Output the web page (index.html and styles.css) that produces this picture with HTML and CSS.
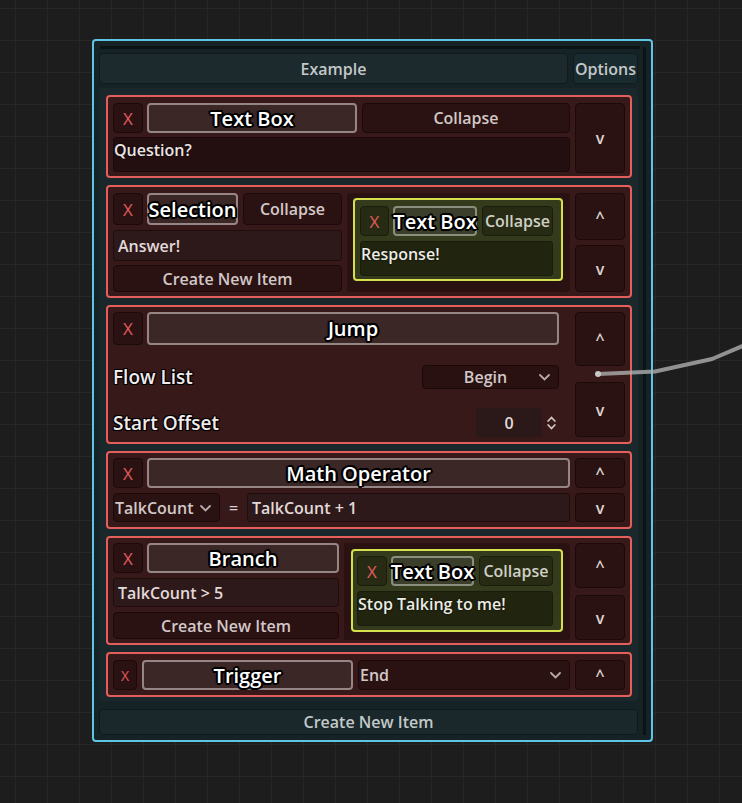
FILE: index.html
```html
<!DOCTYPE html>
<html>
<head>
<meta charset="utf-8">
<link rel="stylesheet" href="styles.css">
</head>
<body>
<div class="canvas">
  <div class="panel">
    <div class="topline"></div>
    <div class="panel-body">
      <div class="main">
        <div class="header">
          <div class="hbtn grow">Example</div>
          <div class="hbtn opts">Options</div>
        </div>
        <div class="list">
          <!-- Text Box -->
          <div class="block">
            <div class="bmain col g4">
              <div class="row h30 g4">
                <div class="btn x w30">X</div>
                <div class="tbtn grow">Text Box</div>
                <div class="btn grow ml1">Collapse</div>
              </div>
              <div class="area h35">Question?</div>
            </div>
            <div class="side col">
              <div class="btn sbtn h70">v</div>
            </div>
          </div>

          <!-- Selection -->
          <div class="block b2">
            <div class="bmain row g5">
              <div class="col w229">
                <div class="row h32 g4">
                  <div class="btn x w30">X</div>
                  <div class="tbtn w91">Selection</div>
                  <div class="btn grow ml1">Collapse</div>
                </div>
                <div class="input h31 mt5">Answer!</div>
                <div class="btn h27 mt4">Create New Item</div>
              </div>
              <div class="nest grow n2">
                <div class="ybox y2">
                  <div class="row h30 g4">
                    <div class="ybtn x w29">X</div>
                    <div class="ytbtn w84">Text Box</div>
                    <div class="ybtn grow ml1">Collapse</div>
                  </div>
                  <div class="yarea h35 mt5">Response!</div>
                </div>
              </div>
            </div>
            <div class="side col g5">
              <div class="btn sbtn grow">^</div>
              <div class="btn sbtn grow">v</div>
            </div>
          </div>

          <!-- Jump -->
          <div class="block b3">
            <div class="bmain col">
              <div class="row h33 g4">
                <div class="btn x w30">X</div>
                <div class="tbtn grow">Jump</div>
              </div>
              <div class="row h30 mt17 between">
                <div class="label">Flow List</div>
                <div class="btn drop w137">
                  <span class="dtext">Begin</span>
                  <svg class="chev" width="11" height="7" viewBox="0 0 11 7"><path d="M1 1 L5.5 5.5 L10 1" stroke="#b9a9a9" stroke-width="1.8" fill="none" stroke-linecap="round"/></svg>
                </div>
              </div>
              <div class="row h29 mt16 between">
                <div class="label">Start Offset</div>
                <div class="row spin">
                  <div class="spinbox">0</div>
                  <svg class="spinicon" width="9" height="16" viewBox="0 0 9 16"><path d="M1.2 6 L4.5 2.5 L7.8 6 M1.2 10 L4.5 13.5 L7.8 10" stroke="#cfc3c3" stroke-width="1.8" fill="none" stroke-linecap="round"/></svg>
                </div>
              </div>
            </div>
            <div class="side col jside">
              <div class="btn sbtn h54">^</div>
              <div class="btn sbtn h55">v</div>
            </div>
          </div>

          <!-- Math Operator -->
          <div class="block b4">
            <div class="bmain col g5">
              <div class="row h30 g4">
                <div class="btn x w30">X</div>
                <div class="tbtn grow">Math Operator</div>
              </div>
              <div class="row h29">
                <div class="btn drop2 w107">
                  <span>TalkCount</span>
                  <svg class="chev" width="11" height="7" viewBox="0 0 11 7"><path d="M1 1 L5.5 5.5 L10 1" stroke="#b9a9a9" stroke-width="1.8" fill="none" stroke-linecap="round"/></svg>
                </div>
                <div class="eq">=</div>
                <div class="input grow">TalkCount + 1</div>
              </div>
            </div>
            <div class="side col g5">
              <div class="btn sbtn h30">^</div>
              <div class="btn sbtn h29">v</div>
            </div>
          </div>

          <!-- Branch -->
          <div class="block b5">
            <div class="bmain row g5">
              <div class="col w226">
                <div class="row h30 g4">
                  <div class="btn x w30">X</div>
                  <div class="tbtn grow">Branch</div>
                </div>
                <div class="input h29 mt5">TalkCount &gt; 5</div>
                <div class="btn h27 mt5">Create New Item</div>
              </div>
              <div class="nest grow n5">
                <div class="ybox y5">
                  <div class="row h30 g4">
                    <div class="ybtn x w30">X</div>
                    <div class="ytbtn w83">Text Box</div>
                    <div class="ybtn grow ml1">Collapse</div>
                  </div>
                  <div class="yarea h35 mt5">Stop Talking to me!</div>
                </div>
              </div>
            </div>
            <div class="side col g7">
              <div class="btn sbtn h45">^</div>
              <div class="btn sbtn h45">v</div>
            </div>
          </div>

          <!-- Trigger -->
          <div class="block b6">
            <div class="bmain row h30 g5">
              <div class="btn x xs w24">X</div>
              <div class="tbtn w211">Trigger</div>
              <div class="btn drop3 grow">
                <span>End</span>
                <svg class="chev" width="11" height="7" viewBox="0 0 11 7"><path d="M1 1 L5.5 5.5 L10 1" stroke="#b9a9a9" stroke-width="1.8" fill="none" stroke-linecap="round"/></svg>
              </div>
            </div>
            <div class="side col">
              <div class="btn sbtn h30">^</div>
            </div>
          </div>
        </div>
        <div class="footer">Create New Item</div>
      </div>
      <div class="scroll"></div>
    </div>
  </div>
</div>
<svg class="wire" width="742" height="803" viewBox="0 0 742 803">
  <path d="M598 374 L655 371.5 L712 359 L745 345" stroke="rgba(175,175,175,0.8)" stroke-width="4" fill="none" stroke-linejoin="round"/>
  <circle cx="598" cy="374" r="3" fill="#c8c8c8"/>
</svg>
</body>
</html>
```
FILE: styles.css
```css
html, body {
  margin: 0;
  padding: 0;
}
body {
  width: 742px;
  height: 803px;
  overflow: hidden;
  position: relative;
  font-family: "Open Sans", "Noto Sans", sans-serif;
  font-weight: 600;
  background-color: #1d1d1d;
  background-image:
    linear-gradient(to right, #272727 1px, transparent 1px),
    linear-gradient(to bottom, #272727 1px, transparent 1px);
  background-size: 32px 32px;
  background-position: 15px 8px;
}
.canvas {
  padding: 39px 0 0 92px;
}
.panel {
  width: 561px;
  height: 703px;
  box-sizing: border-box;
  border: 2px solid #5ec6e4;
  border-radius: 4px;
  background: #162326;
  padding: 5px;
  display: flex;
  flex-direction: column;
}
.topline {
  height: 3px;
  background: #0b1315;
  margin: 0 6px 4px 1px;
  border-radius: 1px;
}
.panel-body {
  display: flex;
  flex: 1;
}
.main {
  width: 539px;
  display: flex;
  flex-direction: column;
}
.scroll {
  width: 3px;
  margin-left: 5px;
  margin-top: -6px;
  background: #0b1315;
  border-radius: 1px;
}
.header {
  display: flex;
  gap: 5px;
  height: 31px;
}
.hbtn {
  box-sizing: border-box;
  background: #1c2a2d;
  border: 1px solid #111b1d;
  border-radius: 4px;
  color: #c3c8c8;
  font-size: 16px;
  display: flex;
  align-items: center;
  justify-content: center;
}
.opts {
  width: 65px;
  background: #1a2b2f;
}
.list {
  margin-top: 4px;
  height: 613px;
  box-sizing: border-box;
  background: #1a282b;
  border-radius: 4px;
  padding: 7px 6px 4px 7px;
  display: flex;
  flex-direction: column;
  gap: 7px;
}
.footer {
  margin-top: 8px;
  height: 26px;
  box-sizing: border-box;
  background: #1a282b;
  border: 1px solid #101a1c;
  border-radius: 4px;
  color: #c3c8c8;
  font-size: 16px;
  display: flex;
  align-items: center;
  justify-content: center;
}

/* blocks */
.block {
  border: 2px solid #e35f5b;
  border-radius: 4px;
  background: #381919;
  display: flex;
  gap: 5px;
  padding: 6px 5px 3px 5px;
}
.b2 { padding: 6px 5px 4px 5px; }
.b3 { padding: 5px 5px 5px 5px; gap: 16px; }
.b4 { padding: 5px 5px 5px 5px; }
.b5 { padding: 5px 5px 3px 5px; }
.b6 { padding: 6px 5px 5px 5px; }

.bmain { flex: 1; min-width: 0; }
.side { width: 50px; }
.jside { justify-content: space-between; }

.row { display: flex; }
.col { display: flex; flex-direction: column; }
.grow { flex: 1; min-width: 0; }
.between { justify-content: space-between; align-items: center; }
.g4 { gap: 4px; }
.g5 { gap: 5px; }
.g7 { gap: 7px; }
.ml1 { margin-left: 1px; }
.mt4 { margin-top: 4px; }
.mt5 { margin-top: 5px; }
.mt16 { margin-top: 16px; }
.mt17 { margin-top: 17px; }

.h27 { height: 27px; }
.h29 { height: 29px; }
.h30 { height: 30px; }
.h31 { height: 31px; }
.h32 { height: 32px; }
.h33 { height: 33px; }
.h35 { height: 35px; }
.h45 { height: 45px; }
.h54 { height: 54px; }
.h55 { height: 55px; }
.h70 { height: 70px; }
.w24 { width: 24px; }
.w29 { width: 29px; }
.w30 { width: 30px; }
.w83 { width: 83px; }
.w84 { width: 84px; }
.w91 { width: 91px; }
.w107 { width: 107px; }
.w137 { width: 137px; }
.w211 { width: 211px; }
.w226 { width: 226px; }
.w229 { width: 229px; }

.btn {
  box-sizing: border-box;
  background: #2b1212;
  border: 1px solid #1c0909;
  border-radius: 4px;
  color: #d2c8c8;
  font-size: 16px;
  display: flex;
  align-items: center;
  justify-content: center;
  white-space: nowrap;
  flex-shrink: 0;
}
.btn.grow { flex-shrink: 1; }
.x {
  color: #e35c5c;
  font-size: 17px;
  font-weight: 400;
}
.xs { font-size: 14px; }
.sbtn {
  font-size: 16px;
  color: #ddd4d4;
}
.tbtn {
  box-sizing: border-box;
  background: #3c2727;
  border: 2px solid #968585;
  border-radius: 4px;
  color: #ffffff;
  font-size: 20px;
  display: flex;
  align-items: center;
  justify-content: center;
  white-space: nowrap;
  flex-shrink: 0;
  text-shadow:
    -1px -1px 0 #000, 1px -1px 0 #000, -1px 1px 0 #000, 1px 1px 0 #000,
    0 -2px 0 #000, 0 2px 0 #000, -2px 0 0 #000, 2px 0 0 #000,
    -2px -1px 0 #000, 2px 1px 0 #000, -1px 2px 0 #000, 1px -2px 0 #000,
    0 0 3px #000;
}
.tbtn.grow { flex-shrink: 1; }

.area {
  box-sizing: border-box;
  background: #230f0f;
  border: 1px solid #1c0909;
  border-radius: 3px;
  color: #ece4e4;
  font-size: 16px;
  line-height: 20px;
  padding: 2px 0 0 0;
  text-shadow: 0 0 2px #000;
}
.input {
  box-sizing: border-box;
  background: #2d1919;
  border: 1px solid #1f0d0d;
  border-radius: 3px;
  color: #e2dada;
  font-size: 16px;
  display: flex;
  align-items: center;
  padding-left: 4px;
  white-space: nowrap;
}

.nest {
  box-sizing: border-box;
  background: #2a1212;
  border-radius: 3px;
}
.n2 { padding: 5px 7px 11px 6px; }
.n5 { padding: 6px 7px 8px 7px; }
.ybox {
  box-sizing: border-box;
  border: 2px solid #d5e04c;
  border-radius: 4px;
  background: #343a1c;
  display: flex;
  flex-direction: column;
}
.y2 { padding: 6px 8px 3px 5px; }
.y5 { padding: 5px 8px 4px 4px; }
.ybtn {
  box-sizing: border-box;
  background: #272b14;
  border: 1px solid #1a1d0b;
  border-radius: 4px;
  color: #cfd0c4;
  font-size: 16px;
  display: flex;
  align-items: center;
  justify-content: center;
  white-space: nowrap;
  flex-shrink: 0;
}
.ybtn.x { color: #e35c5c; font-size: 17px; font-weight: 400; }
.ybtn.grow { flex-shrink: 1; }
.ytbtn {
  box-sizing: border-box;
  background: #3a3e2a;
  border: 2px solid #8b8e7e;
  border-radius: 4px;
  color: #ffffff;
  font-size: 20px;
  display: flex;
  align-items: center;
  justify-content: center;
  white-space: nowrap;
  flex-shrink: 0;
  overflow: visible;
  text-shadow:
    -1px -1px 0 #000, 1px -1px 0 #000, -1px 1px 0 #000, 1px 1px 0 #000,
    0 -2px 0 #000, 0 2px 0 #000, -2px 0 0 #000, 2px 0 0 #000,
    -2px -1px 0 #000, 2px 1px 0 #000, -1px 2px 0 #000, 1px -2px 0 #000,
    0 0 3px #000;
}
.yarea {
  box-sizing: border-box;
  background: #21240f;
  border: 1px solid #1a1c0a;
  border-radius: 3px;
  color: #ecece4;
  font-size: 16px;
  line-height: 20px;
  padding: 2px 0 0 0;
  text-shadow: 0 0 2px #000;
  white-space: nowrap;
}

.label {
  color: #f0eaea;
  font-size: 19px;
  text-shadow:
    -1px -1px 0 #000, 1px -1px 0 #000, -1px 1px 0 #000, 1px 1px 0 #000,
    0 0 2px #000;
}
.drop {
  position: relative;
  background: #2a1111;
  border-color: #1c0808;
}
.drop .dtext { margin-right: 10px; }
.chev {
  position: absolute;
  right: 8px;
  top: 50%;
  margin-top: -3px;
}
.drop2, .drop3 {
  position: relative;
  justify-content: flex-start;
  padding-left: 1px;
}
.spin {
  align-items: center;
  height: 29px;
  margin-right: 3px;
}
.spinbox {
  box-sizing: border-box;
  width: 66px;
  height: 29px;
  background: #2b1818;
  border-radius: 3px;
  color: #e4dcdc;
  font-size: 16px;
  display: flex;
  align-items: center;
  justify-content: center;
  margin-right: 5px;
}
.spinicon { display: block; }
.eq {
  width: 27px;
  color: #d8d0d0;
  font-size: 16px;
  display: flex;
  align-items: center;
  justify-content: center;
}

.wire {
  position: absolute;
  left: 0;
  top: 0;
  pointer-events: none;
}
```
